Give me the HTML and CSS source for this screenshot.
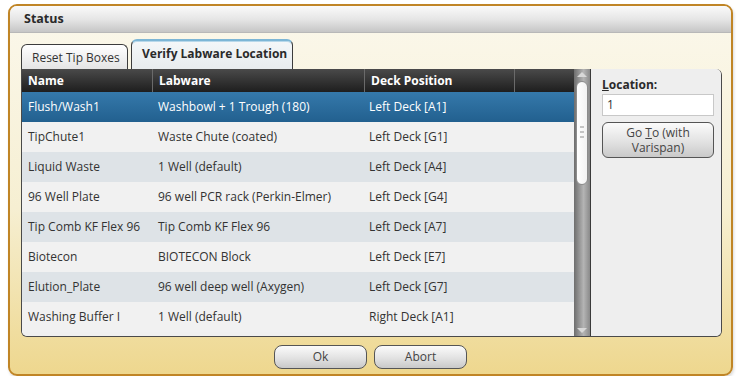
FILE: index.html
```html
<!DOCTYPE html>
<html>
    <head>
        <meta charset="utf-8"/>
        <link rel="stylesheet" href="styles.css">
    </head>
    <body>
        <div class="window">
            <div class="titlebar">Status</div>

            <!-- tab strip -->
            <div class="tabs">
                <div class="tab">Reset Tip Boxes</div>
                <div class="tab selected">Verify Labware Location</div>
            </div>

            <div class="panel">
                <div class="grid">
                    <div class="row head">
                        <div class="c1">Name</div>
                        <div class="c2">Labware</div>
                        <div class="c3">Deck Position</div>
                        <div class="c4"></div>
                    </div>
                    <div class="row sel">
                        <div class="c1">Flush/Wash1</div>
                        <div class="c2">Washbowl + 1 Trough (180)</div>
                        <div class="c3">Left Deck [A1]</div>
                    </div>
                    <div class="row">
                        <div class="c1">TipChute1</div>
                        <div class="c2">Waste Chute (coated)</div>
                        <div class="c3">Left Deck [G1]</div>
                    </div>
                    <div class="row alt">
                        <div class="c1">Liquid Waste</div>
                        <div class="c2">1 Well (default)</div>
                        <div class="c3">Left Deck [A4]</div>
                    </div>
                    <div class="row">
                        <div class="c1">96 Well Plate</div>
                        <div class="c2">96 well PCR rack (Perkin-Elmer)</div>
                        <div class="c3">Left Deck [G4]</div>
                    </div>
                    <div class="row alt">
                        <div class="c1">Tip Comb KF Flex 96</div>
                        <div class="c2">Tip Comb KF Flex 96</div>
                        <div class="c3">Left Deck [A7]</div>
                    </div>
                    <div class="row">
                        <div class="c1">Biotecon</div>
                        <div class="c2">BIOTECON Block</div>
                        <div class="c3">Left Deck [E7]</div>
                    </div>
                    <div class="row alt">
                        <div class="c1">Elution_Plate</div>
                        <div class="c2">96 well deep well (Axygen)</div>
                        <div class="c3">Left Deck [G7]</div>
                    </div>
                    <div class="row last">
                        <div class="c1">Washing Buffer I</div>
                        <div class="c2">1 Well (default)</div>
                        <div class="c3">Right Deck [A1]</div>
                    </div>
                </div>

                <!-- vertical scroll bar -->
                <div class="scroll">
                    <div class="arrow up"></div>
                    <div class="thumb"><span class="grip"></span></div>
                    <div class="track"></div>
                    <div class="arrow down"></div>
                </div>

                <div class="side">
                    <div class="label"><u>L</u>ocation:</div>
                    <div class="input">1</div>
                    <div class="btn goto">Go <u>T</u>o (with<br>Varispan)</div>
                </div>
            </div>

            <div class="footer">
                <div class="btn wide">Ok</div>
                <div class="btn wide">Abort</div>
            </div>
        </div>
    </body>
</html>
```

FILE: styles.css
```css
/* page around the dialog */
body {
    margin: 0;
    background-color: #ffffff;
    font-family: "Open Sans", "Noto Sans", sans-serif;
    font-size: 12px;
    color: #333333;
}

/* the dialog frame */
.window {
    margin: 4px 0 0 8px;
    width: 725px;
    height: 372px;
    box-sizing: border-box;
    border: 2px solid #c08526;
    border-radius: 9px;
    overflow: hidden;
    background: linear-gradient(#fbf8ec, #f6efd2 55%, #eed78e);
    display: flex;
    flex-direction: column;
    box-shadow: 1px 2px 3px rgba(0, 0, 0, 0.15);
}

.titlebar {
    height: 26px;
    padding-left: 14px;
    line-height: 25px;
    font-weight: bold;
    font-size: 12.5px;
    color: #2a2a2a;
    background: linear-gradient(#fafafa, #e6e6e6 50%, #c6c6c6);
    border-bottom: 1px solid #b8b8b8;
}

/* tabs */
.tabs {
    display: flex;
    align-items: flex-end;
    gap: 3px;
    padding-left: 11px;
    height: 36px;
}
.tab {
    box-sizing: border-box;
    width: 107px;
    height: 25px;
    line-height: 25px;
    padding-left: 10px;
    white-space: nowrap;
    border: 1px solid #3c3c3c;
    border-bottom: none;
    border-radius: 6px 6px 0 0;
    background: linear-gradient(#ffffff, #e4e4e4);
    color: #333333;
}
.tab.selected {
    width: 162px;
    height: 30px;
    line-height: 25px;
    font-weight: bold;
    color: #2a2a2a;
    border-top: 2px solid #7db6d6;
    background: linear-gradient(#f4f7f9, #e8ecee);
    box-shadow: inset 0 1px 0 #b8d8ea;
}

/* tab content */
.panel {
    display: flex;
    margin: 0 9px 0 11px;
    height: 267px;
    border: 1px solid #4a4a4a;
    border-top: none;
    border-radius: 0 6px 6px 6px;
    overflow: hidden;
    background-color: #eeeeee;
}

.grid {
    width: 552px;
    background-color: #f0f0f0;
}
.row {
    display: flex;
    height: 30px;
    line-height: 29px;
    background-color: #f1f1f1;
    white-space: nowrap;
}
.row.alt {
    background-color: #dee3e7;
}
.row.sel {
    background: linear-gradient(#3579ab, #22608f);
    color: #ffffff;
}
.row.head {
    height: 23px;
    line-height: 23px;
    background: linear-gradient(#4a4a4a, #1e1e1e);
    color: #ffffff;
    font-weight: bold;
}
.row.head div {
    border-right: 1px solid #6a6a6a;
}
.c1 {
    width: 124px;
    padding-left: 6px;
}
.c2 {
    width: 205px;
    padding-left: 6px;
}
.c3 {
    width: 143px;
    padding-left: 6px;
}
.row.head .c4 {
    flex: 1;
    border-right: none;
}

/* scroll bar */
.scroll {
    width: 16px;
    display: flex;
    flex-direction: column;
    align-items: center;
    background: linear-gradient(90deg, #6e6e6e, #b4b4b4 60%, #8a8a8a);
    border-right: 1px solid #3a3a3a;
}
.arrow {
    width: 0;
    height: 0;
    border-left: 5px solid transparent;
    border-right: 5px solid transparent;
    margin: 3px 0;
}
.arrow.up {
    border-bottom: 5px solid #d8d8d8;
}
.arrow.down {
    border-top: 5px solid #d8d8d8;
}
.thumb {
    width: 12px;
    height: 104px;
    margin-top: 1px;
    box-sizing: border-box;
    border: 1px solid #8c8c8c;
    border-radius: 6px;
    background: linear-gradient(90deg, #ffffff, #f2f2f2);
    display: flex;
    align-items: center;
    justify-content: center;
}
.grip {
    width: 4px;
    height: 14px;
    background: repeating-linear-gradient(#c4c4c4 0 2px, transparent 2px 5px);
}
.track {
    flex: 1;
}

/* right side panel */
.side {
    flex: 1;
    padding: 9px 7px 0 11px;
    background-color: #eeeeee;
}
.label {
    font-weight: bold;
    color: #2a2a2a;
    line-height: 14px;
}
.input {
    margin-top: 2px;
    height: 22px;
    box-sizing: border-box;
    border: 1px solid #c8c8c8;
    background-color: #ffffff;
    padding-left: 4px;
    line-height: 20px;
}
.btn {
    box-sizing: border-box;
    border: 1px solid #555555;
    border-radius: 6px;
    background: linear-gradient(#fbfbfb, #e2e2e2 55%, #c9c9c9);
    text-align: center;
    color: #444444;
}
.goto {
    margin-top: 6px;
    height: 36px;
    line-height: 15px;
    padding-top: 2px;
}

/* bottom buttons */
.footer {
    display: flex;
    justify-content: center;
    gap: 7px;
    padding-top: 8px;
}
.wide {
    width: 93px;
    height: 24px;
    line-height: 21px;
    border-radius: 8px;
}
```
